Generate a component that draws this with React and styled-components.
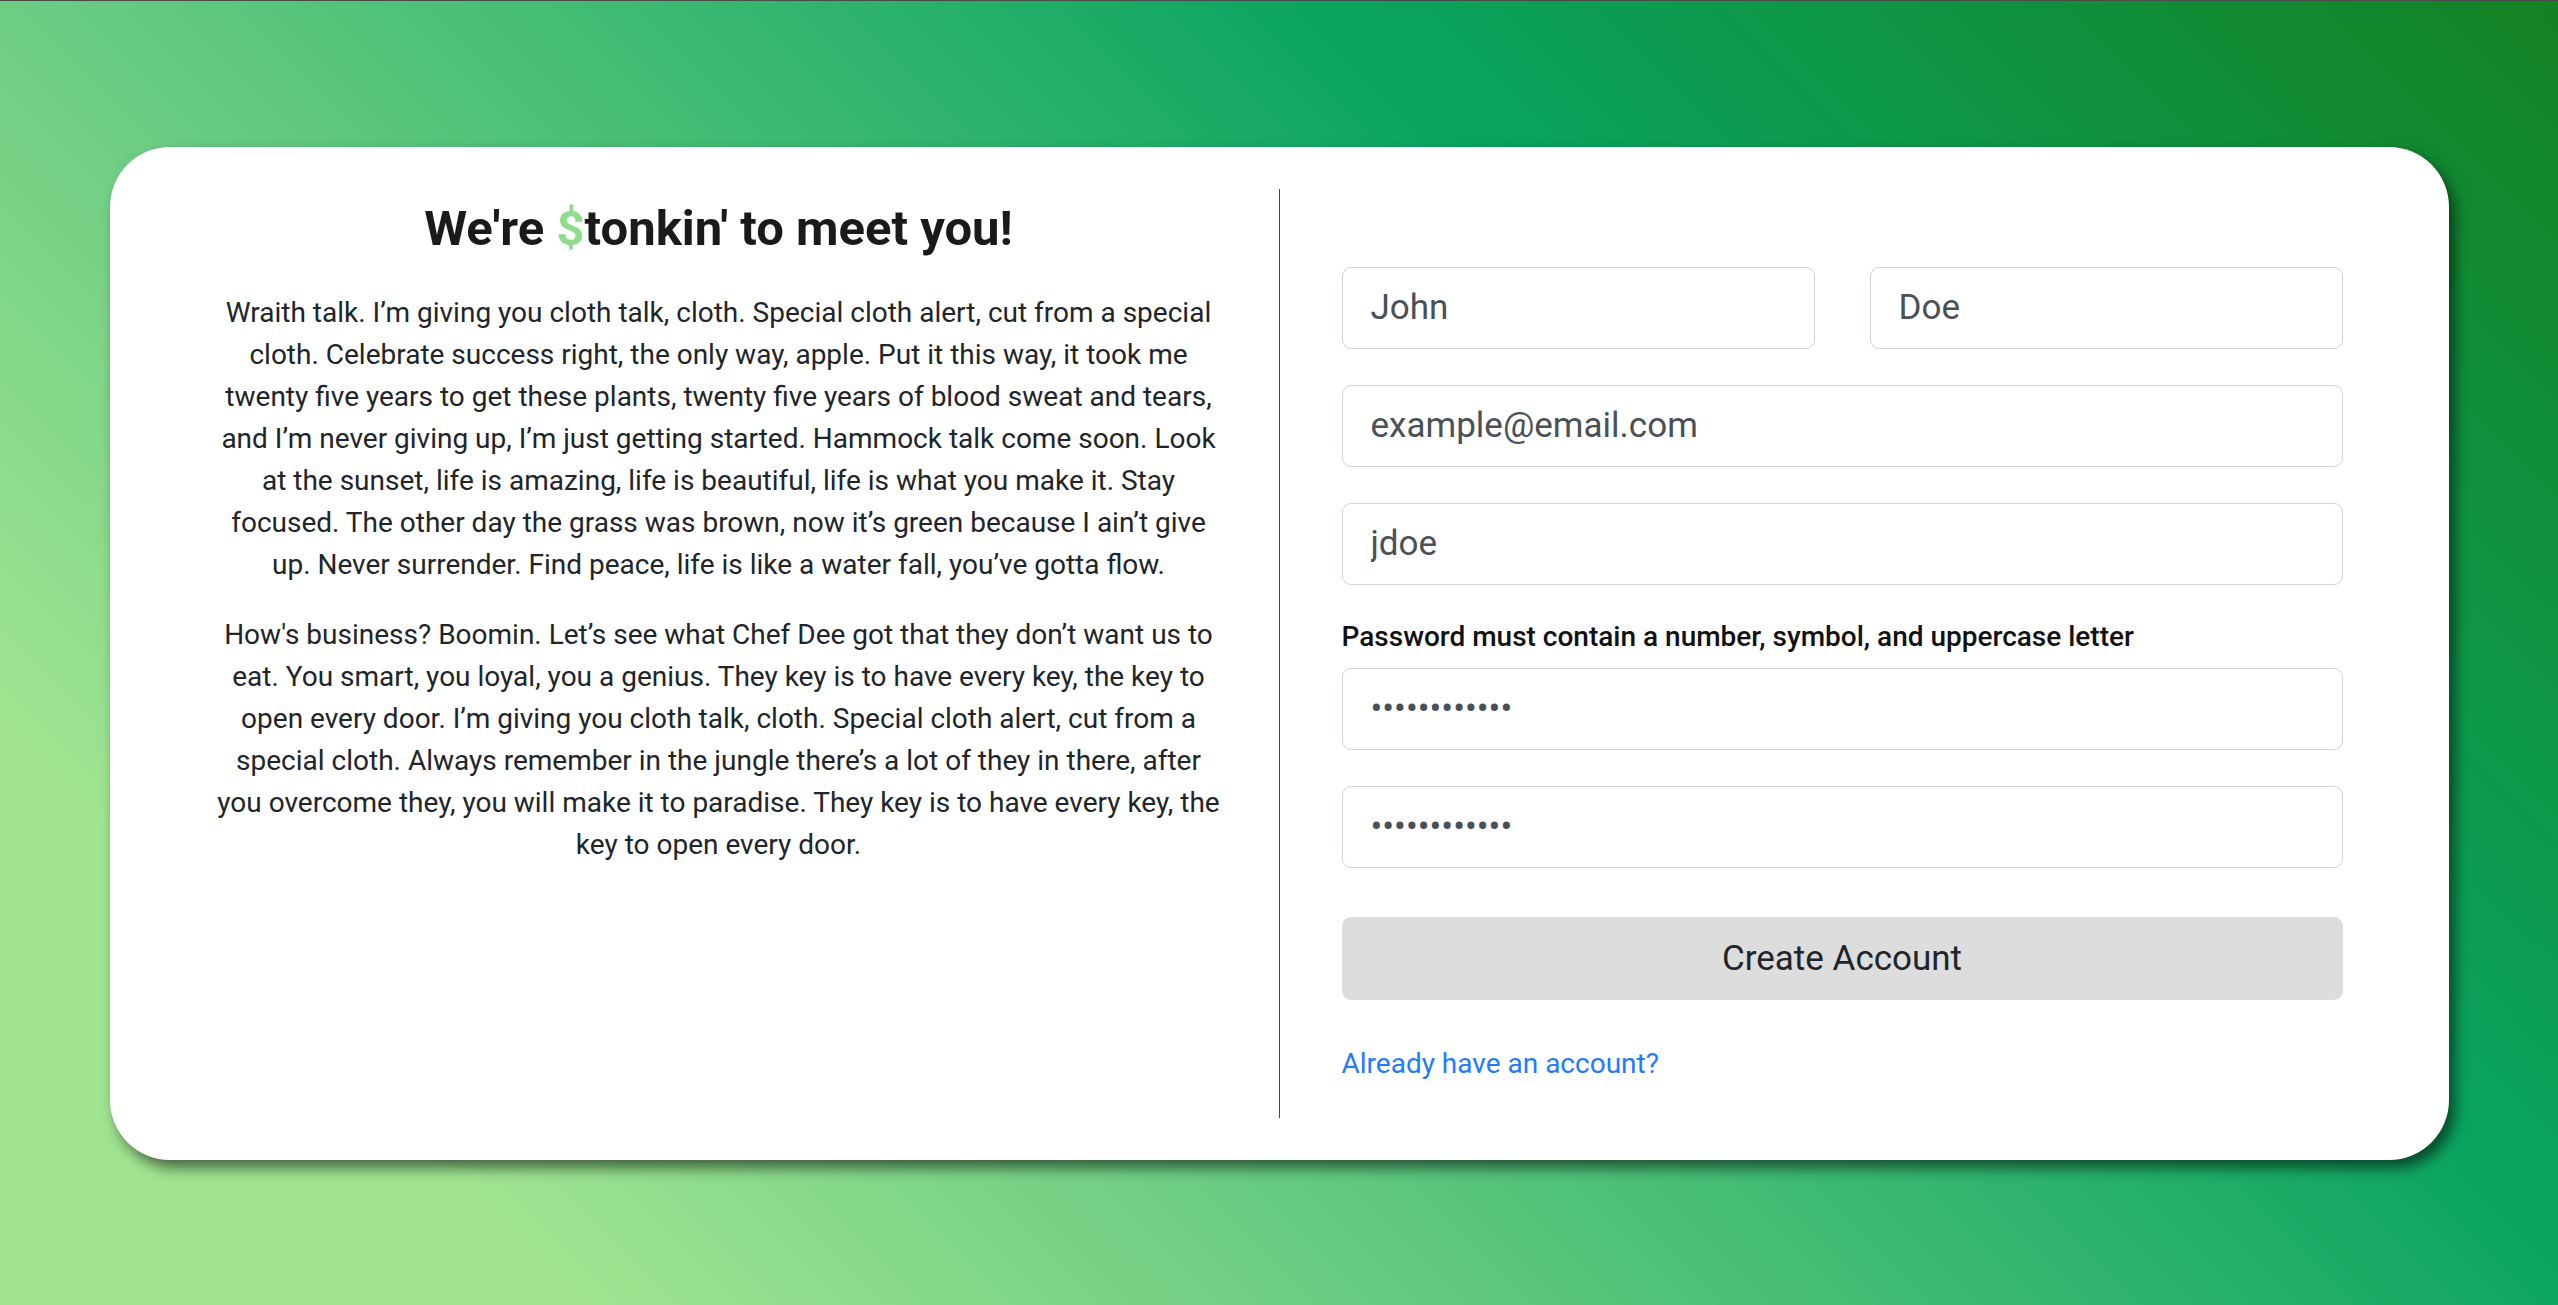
import React, { useState } from 'react';
import styled, { createGlobalStyle } from 'styled-components';

const GlobalStyle = createGlobalStyle`
  * {
    box-sizing: border-box;
  }
  html, body {
    margin: 0;
    padding: 0;
  }
  body {
    font-family: Roboto, "Liberation Sans", Arial, sans-serif;
    color: #212529;
  }
`;

const Page = styled.div`
  min-height: 100vh;
  border-top: 1px solid #4a4a4a;
  display: flex;
  align-items: center;
  justify-content: center;
  background: linear-gradient(45deg, #a0e491 15%, #6ccd83 34%, #0aa45f 68%, #148123 100%);
`;

const Card = styled.div`
  display: flex;
  background: #fff;
  border-radius: 60px;
  padding: 42px 106px 42px 103px;
  box-shadow: 6px 8px 14px rgba(0, 0, 0, 0.55);
`;

const Intro = styled.div`
  width: 1012px;
  padding-top: 11px;
  text-align: center;
`;

const Heading = styled.h3`
  margin: 0 0 34px;
  font-size: 49px;
  line-height: 1.2;
  font-weight: 700;
  color: #1a1a1a;
`;

const Dollar = styled.span`
  color: #8fdc8c;
`;

const Copy = styled.p`
  margin: 0 0 28px;
  font-size: 28px;
  line-height: 42px;
  color: #212529;
`;

const Form = styled.form`
  width: 1064px;
  margin-left: 54px;
  padding: 78px 0 33px 62px;
  border-left: 1px solid #444;
  display: flex;
  flex-direction: column;
`;

const NameRow = styled.div`
  display: grid;
  grid-template-columns: 1fr 1fr;
  gap: 55px;
`;

const Input = styled.input`
  display: block;
  width: 100%;
  height: 82px;
  margin-top: ${p => p.$gap || 0}px;
  padding: 14px 28px;
  font-family: Roboto, "Liberation Sans", Arial, sans-serif;
  font-size: 35px;
  line-height: 1.5;
  color: #495057;
  background: #fff;
  border: 1px solid #ced4da;
  border-radius: 9px;
  outline: none;
`;

const Label = styled.label`
  display: block;
  margin: 31px 0 10px;
  font-size: 28px;
  line-height: 42px;
  font-weight: 500;
  color: #111;
`;

const Submit = styled.button`
  margin-top: 49px;
  height: 83px;
  width: 100%;
  border: none;
  border-radius: 9px;
  background: #dddddd;
  color: #212529;
  font-family: Roboto, "Liberation Sans", Arial, sans-serif;
  font-size: 35px;
  cursor: pointer;
`;

const LoginLink = styled.a`
  margin-top: 43px;
  font-size: 28px;
  line-height: 42px;
  color: #1f7aff;
  text-decoration: none;
  align-self: flex-start;
`;

export default function App() {
  const [form, setForm] = useState({
    first: 'John',
    last: 'Doe',
    email: 'example@email.com',
    username: 'jdoe',
    password: 'Password123!',
    confirm: 'Password123!'
  });

  const handleChange = e => {
    const { name, value } = e.target;
    setForm({ ...form, [name]: value });
  };

  return (
    <React.Fragment>
      <GlobalStyle />
      <Page>
        <Card>
          <Intro>
            <Heading>
              We're <Dollar>$</Dollar>tonkin' to meet you!
            </Heading>
            <Copy>
              Wraith talk. I’m giving you cloth talk, cloth. Special cloth alert, cut from a special cloth.
              Celebrate success right, the only way, apple. Put it this way, it took me twenty five years to
              get these plants, twenty five years of blood sweat and tears, and I’m never giving up, I’m just
              getting started. Hammock talk come soon. Look at the sunset, life is amazing, life is beautiful,
              life is what you make it. Stay focused. The other day the grass was brown, now it’s green because
              I ain’t give up. Never surrender. Find peace, life is like a water fall, you’ve gotta flow.
            </Copy>
            <Copy>
              How's business? Boomin. Let’s see what Chef Dee got that they don’t want us to eat. You smart,
              you loyal, you a genius. They key is to have every key, the key to open every door. I’m giving you
              cloth talk, cloth. Special cloth alert, cut from a special cloth. Always remember in the jungle
              there’s a lot of they in there, after you overcome they, you will make it to paradise. They key is
              to have every key, the key to open every door.
            </Copy>
          </Intro>
          <Form onSubmit={e => e.preventDefault()}>
            <NameRow>
              <Input name="first" value={form.first} onChange={handleChange} placeholder="First name" />
              <Input name="last" value={form.last} onChange={handleChange} placeholder="Last name" />
            </NameRow>
            <Input $gap={36} type="email" name="email" value={form.email} onChange={handleChange} />
            <Input $gap={36} name="username" value={form.username} onChange={handleChange} />
            <Label htmlFor="password">Password must contain a number, symbol, and uppercase letter</Label>
            <Input id="password" type="password" name="password" value={form.password} onChange={handleChange} />
            <Input $gap={36} type="password" name="confirm" value={form.confirm} onChange={handleChange} />
            <Submit type="submit">Create Account</Submit>
            <LoginLink href="#">Already have an account?</LoginLink>
          </Form>
        </Card>
      </Page>
    </React.Fragment>
  );
}
